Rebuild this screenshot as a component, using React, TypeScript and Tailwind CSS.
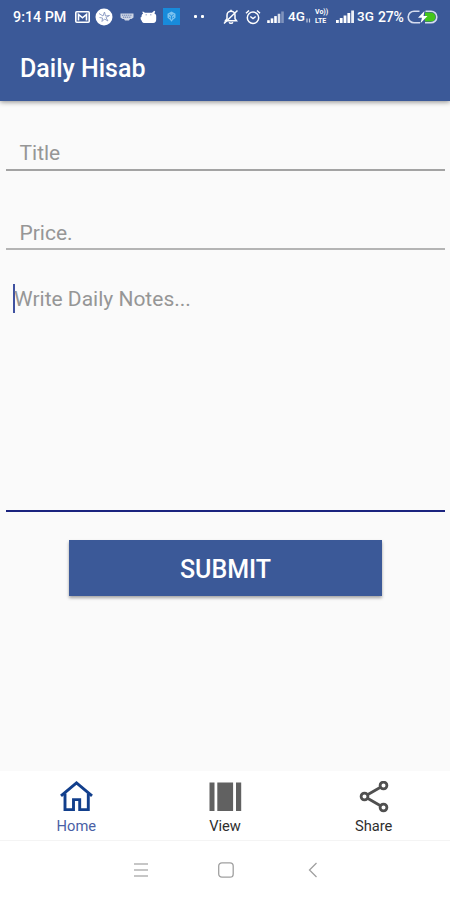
import { useState } from "react";
import type { ReactNode } from "react";

type Tab = "home" | "view" | "share";

const SignalIcon = ({ className, faded }: { className: string; faded?: boolean }) => (
  <svg viewBox="0 0 18 13" className={className} fill="#fff">
    <rect x="0" y="10" width="2.8" height="3" />
    <rect x="3.8" y="8" width="2.8" height="5" />
    <rect x="7.6" y="5.5" width="2.8" height="7.5" />
    <rect x="11.4" y="3" width="2.8" height="10" opacity={faded ? 0.8 : 1} />
    <rect x="15.2" y="0.5" width="2.8" height="12.5" opacity={faded ? 0.35 : 0.9} />
  </svg>
);

const StatusBar = () => (
  <div className="flex h-[33px] items-center pl-[13px] text-[14px] leading-none font-medium text-white">
    <span className="mt-px w-[54px] text-[14.3px] whitespace-nowrap">9:14 PM</span>

    {/* mail */}
    <svg viewBox="0 0 15 12" className="ml-[8px] h-[12px] w-[15px] shrink-0">
      <rect x="0.8" y="0.8" width="13.4" height="10.4" rx="1" fill="none" stroke="#fff" strokeWidth="1.6" />
      <path d="M3.5 9.5V3.5L7.5 6.8l4-3.3v6" fill="none" stroke="#fff" strokeWidth="1.6" />
    </svg>

    {/* round app badge */}
    <svg viewBox="0 0 18 18" className="ml-[5px] h-[18px] w-[18px] shrink-0">
      <circle cx="9" cy="9" r="8.5" fill="#fff" />
      <path
        d="M4 5.5l4 2.5 1.5-4 1 4 4-.5-3.5 2 2 3.5-3.5-2-2.5 2.5.5-3.5-3-.5"
        fill="none"
        stroke="#8796c0"
        strokeWidth="0.9"
      />
    </svg>

    {/* keyboard */}
    <svg viewBox="0 0 14 8" className="ml-[7px] h-[8px] w-[14px] shrink-0">
      <path d="M0.5 0.5h13v4l-2 1.5H10L9 7.5H5L4 6H2.5l-2-1.5z" fill="#fff" opacity="0.75" />
      <path d="M2 2.2h10M3 4.2h8" stroke="#3b5998" strokeWidth="0.7" strokeDasharray="1.2 0.7" />
    </svg>

    {/* android head */}
    <svg viewBox="0 0 17 14" className="ml-[6px] h-[14px] w-[17px] shrink-0">
      <path
        d="M3 1.5L5 2.8h7l2.2-2 1 .7-.8 2c1.3.5 1.8 1.3 1.8 2.5v3.5c0 2-1 3.500-3 3.500H5c-2 0-3-.8-3.300-2.300L.8 9.500.5 7.500l1-.5C1.500 5 2 4 3.200 3.500L2.200 2z"
        fill="#fff"
      />
      <path d="M5.5 4.8H7M10 4.8h1.5" stroke="#7d8fbd" strokeWidth="0.8" />
    </svg>

    {/* blue app badge */}
    <svg viewBox="0 0 17 17" className="ml-[6px] h-[17px] w-[17px] shrink-0">
      <rect width="17" height="17" fill="#188bdb" />
      <path d="M8.5 3.5l4 2.2v4l-2.5 2-1.5 2-1.5-2-2.500-2v-4z" fill="#7cc2ef" />
      <path d="M6.3 6.5l2.2 1.3 2.2-1.3M8.5 8v3.5M6 9l1.5 1M11 9l-1.500 1" fill="none" stroke="#188bdb" strokeWidth="0.9" />
    </svg>

    <div className="ml-[14px] flex gap-[4px]">
      <span className="size-[3px] rounded-[1px] bg-white" />
      <span className="size-[3px] rounded-[1px] bg-white" />
    </div>

    {/* muted bell */}
    <svg viewBox="0 0 16 16" className="ml-[19px] h-[16px] w-[16px] shrink-0" fill="none" stroke="#fff" strokeWidth="1.5">
      <path d="M2.5 11.8L4 9.8V6.2a4 4 0 0 1 8 0v3.6l1.5 2z" />
      <path d="M8 .8v1.6M6.2 13.3c.5 1.4 3.1 1.4 3.6 0M14.5 1.5L1 14.5" />
    </svg>

    {/* alarm */}
    <svg viewBox="0 0 16 16" className="ml-[6px] h-[16px] w-[16px] shrink-0" fill="none" stroke="#fff" strokeWidth="1.5">
      <circle cx="8" cy="8.8" r="5.7" />
      <path d="M5.3 7.5L8 9.5l2.7-2M1 4.2L4 1.5M15 4.2L12 1.5" />
    </svg>

    <SignalIcon className="ml-[6px] h-[12px] w-[17px] shrink-0" faded />
    <span className="ml-[4px] w-[18px] text-[13.5px]">4G</span>
    <svg viewBox="0 0 5 5" className="mt-[7px] h-[5px] w-[5px] shrink-0" stroke="#fff" opacity="0.7">
      <path d="M1 0.5v4M3.5 0.5v4" strokeWidth="1.2" />
    </svg>
    <span className="ml-[4px] w-[15px] text-[7px] leading-[8.5px] font-bold">
      Vo))
      <br />
      LTE
    </span>
    <SignalIcon className="ml-[6px] h-[13px] w-[18px] shrink-0" />
    <span className="ml-[3px] w-[18px] text-[13.5px]">3G</span>
    <span className="ml-[3px] w-[28px] text-[14px] tracking-[-0.2px]">27%</span>

    {/* charging battery */}
    <svg viewBox="0 0 31 14" className="ml-px h-[14px] w-[31px] shrink-0">
      <path d="M18 2.5h6a4.5 4.5 0 0 1 0 9h-6z" fill="#45c51b" />
      <path
        d="M12.5 1.2H7a5.8 5.8 0 0 0 0 11.6h6M18.5 1.2H24a5.8 5.8 0 0 1 0 11.6h-6"
        fill="none"
        stroke="#d5dcef"
        strokeWidth="1.6"
      />
      <path d="M17.5 1l-6.5 6.7h4l-1.5 5.6L20.5 6h-4z" fill="#fff" />
    </svg>
  </div>
);

const HomeIcon = () => (
  <svg viewBox="0 0 34 32" className="h-[32px] w-[34px]" fill="none" stroke="#123f8c" strokeWidth="2.9">
    <path d="M2 14.8L17.5 2 33 14.8" />
    <path d="M6 12.5v16.1h8.500V18.600h6.200v10h8.600V12.500" />
  </svg>
);

const ViewIcon = () => (
  <svg viewBox="0 0 34 32" className="h-[32px] w-[34px]" fill="#616161">
    <rect x="1.5" y="1.5" width="5" height="28.5" />
    <rect x="9.3" y="1.5" width="15.8" height="28.5" />
    <rect x="28" y="1.5" width="5.2" height="28.5" />
  </svg>
);

const ShareIcon = () => (
  <svg viewBox="0 0 34 32" className="h-[32px] w-[34px]" fill="none" stroke="#505050" strokeWidth="2.8">
    <circle cx="7.5" cy="15.500" r="3.4" />
    <circle cx="26.5" cy="4.500" r="3.4" />
    <circle cx="26.5" cy="26.500" r="3.4" />
    <path d="M10.500 13.800L23.500 6.200M10.500 17.200L23.500 24.800" />
  </svg>
);

const tabs: { id: Tab; label: string; icon: ReactNode }[] = [
  { id: "home", label: "Home", icon: <HomeIcon /> },
  { id: "view", label: "View", icon: <ViewIcon /> },
  { id: "share", label: "Share", icon: <ShareIcon /> },
];

export default function App() {
  const [activeTab, setActiveTab] = useState<Tab>("home");

  return (
    <div className="flex h-[900px] w-[450px] flex-col overflow-hidden bg-[#fafafa] font-[Roboto,sans-serif]">
      <header className="h-[101px] shrink-0 bg-[#3b5998] shadow-[0_1px_5px_rgba(0,0,0,0.45)]">
        <StatusBar />
        <h1 className="pt-[21px] pl-[20px] text-[25px] leading-[30px] font-medium text-white">Daily Hisab</h1>
      </header>

      <main className="flex flex-1 flex-col pr-[5px] pl-[6px]">
        <div className="mt-[32px] h-[38px] border-b-2 border-[#a3a3a3] pl-[13.5px] text-[21px] leading-[40px] text-[#969696]">
          Title
        </div>
        <div className="mt-[41px] h-[38px] border-b-2 border-[#b4b4b4] pl-[13.5px] text-[21px] leading-[42px] text-[#969696]">
          Price.
        </div>
        <div className="flex h-[262px] items-start border-b-2 border-[#1a237e] pt-[34px] pl-[7px] text-[21px] leading-[31px] text-[#969696]">
          <span className="h-[29px] w-[2px] bg-[#3f51a0]" />
          <span className="-ml-px">Write Daily Notes...</span>
        </div>

        <button className="mt-[28px] ml-[63px] h-[56px] w-[313px] bg-[#3b5998] pt-[3px] text-[25px] font-medium text-white shadow-[0_2px_3px_rgba(0,0,0,0.35)]">
          SUBMIT
        </button>
      </main>

      <nav className="flex h-[69px] shrink-0 bg-white px-[2px]">
        {tabs.map((tab) => (
          <button
            key={tab.id}
            onClick={() => setActiveTab(tab.id)}
            className="flex flex-1 flex-col items-center pt-[10px]"
          >
            {tab.icon}
            <span
              className={
                activeTab === tab.id
                  ? "mt-[4px] text-[14.7px] leading-[18px] text-[#4a5fa5]"
                  : "mt-[4px] text-[14.7px] leading-[18px] text-[#2e2e2e]"
              }
            >
              {tab.label}
            </span>
          </button>
        ))}
      </nav>

      {/* system navigation */}
      <div className="flex h-[60px] shrink-0 items-center border-t border-[#f4f4f4] bg-white pb-px pl-[133px]">
        <svg viewBox="0 0 16 16" className="size-[16px]" stroke="#b4b4b4" strokeWidth="1.5">
          <path d="M1 2h14M1 8h14M1 14h14" />
        </svg>
        <svg viewBox="0 0 18 16" className="ml-[68px] h-[16px] w-[18px]">
          <rect x="1.7" y="0.8" width="14.5" height="14.4" rx="3.2" fill="none" stroke="#a0a0a0" strokeWidth="1.3" />
        </svg>
        <svg viewBox="0 0 10 16" className="ml-[73px] h-[16px] w-[10px]" fill="none" stroke="#a0a0a0" strokeWidth="1.3">
          <path d="M8.5 1L1.5 8l7 7" />
        </svg>
      </div>
    </div>
  );
}
